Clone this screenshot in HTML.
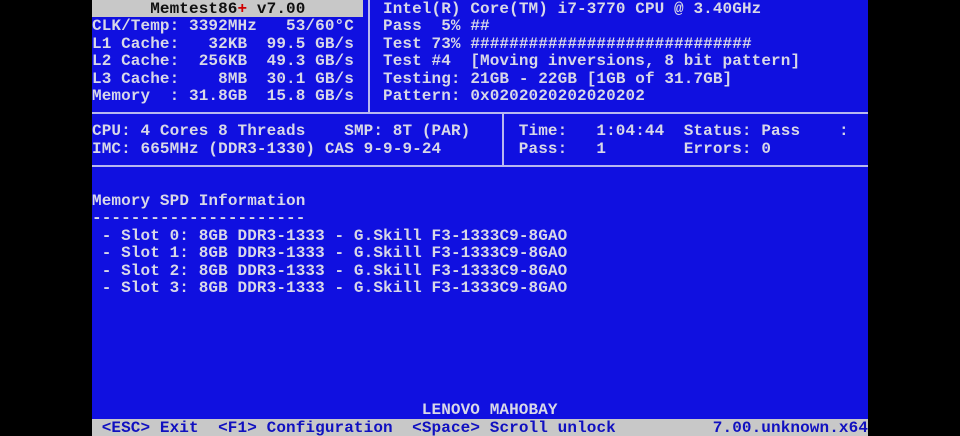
<!DOCTYPE html>
<html><head><style>
html,body{margin:0;padding:0;background:#000;width:960px;height:436px;overflow:hidden}
#s{position:absolute;left:92px;top:0;width:776px;height:436px;background:#1010e0;overflow:hidden}
.t{position:absolute;white-space:pre;font-family:"Liberation Mono",monospace;font-size:16px;font-weight:bold;line-height:17.44px;letter-spacing:0.1px;color:#d8d8e8;margin-top:1px}
.l{position:absolute;background:#b8b8f0}
</style></head><body>
<div id="s">
<div style="position:absolute;left:0;top:0;width:271px;height:17px;background:#c8c8c8"></div>
<div style="position:absolute;left:0;top:418.6px;width:776px;height:18px;background:#c8c8c8"></div>
<div class="l" style="left:276px;top:0;width:2px;height:113px"></div>
<div class="l" style="left:0;top:112px;width:776px;height:2px"></div>
<div class="l" style="left:410px;top:113px;width:2px;height:53px"></div>
<div class="l" style="left:0;top:165px;width:776px;height:2px"></div>
<script>
var R=17.44,C=9.7;
function t(r,c,s,col){document.write('<div class="t" style="top:'+(r*R)+'px;left:'+(c*C)+'px'+(col?';color:'+col:'')+'">'+s+'</div>');}
t(0,6,'Memtest86<span style="color:#d00000">+</span> v7.00','#101010');
t(1,0,'CLK/Temp: 3392MHz   53/60°C');
t(2,0,'L1 Cache:   32KB  99.5 GB/s');
t(3,0,'L2 Cache:  256KB  49.3 GB/s');
t(4,0,'L3 Cache:    8MB  30.1 GB/s');
t(5,0,'Memory  : 31.8GB  15.8 GB/s');
t(0,30,'Intel(R) Core(TM) i7-3770 CPU @ 3.40GHz');
t(1,30,'Pass  5% ##');
t(2,30,'Test 73% #############################');
t(3,30,'Test #4  [Moving inversions, 8 bit pattern]');
t(4,30,'Testing: 21GB - 22GB [1GB of 31.7GB]');
t(5,30,'Pattern: 0x0202020202020202');
t(7,0,'CPU: 4 Cores 8 Threads    SMP: 8T (PAR)');
t(8,0,'IMC: 665MHz (DDR3-1330) CAS 9-9-9-24');
t(7,44,'Time:   1:04:44  Status: Pass    :');
t(8,44,'Pass:   1        Errors: 0');
t(11,0,'Memory SPD Information');
t(12,0,'----------------------');
for(var i=0;i<4;i++)t(13+i,1,'- Slot '+i+': 8GB DDR3-1333 - G.Skill F3-1333C9-8GAO');
t(23,34,'LENOVO MAHOBAY');
t(24,1,'&lt;ESC&gt; Exit  &lt;F1&gt; Configuration  &lt;Space&gt; Scroll unlock','#1010c0');
t(24,64,'7.00.unknown.x64','#1010c0');
</script>
</div>
</body></html>
